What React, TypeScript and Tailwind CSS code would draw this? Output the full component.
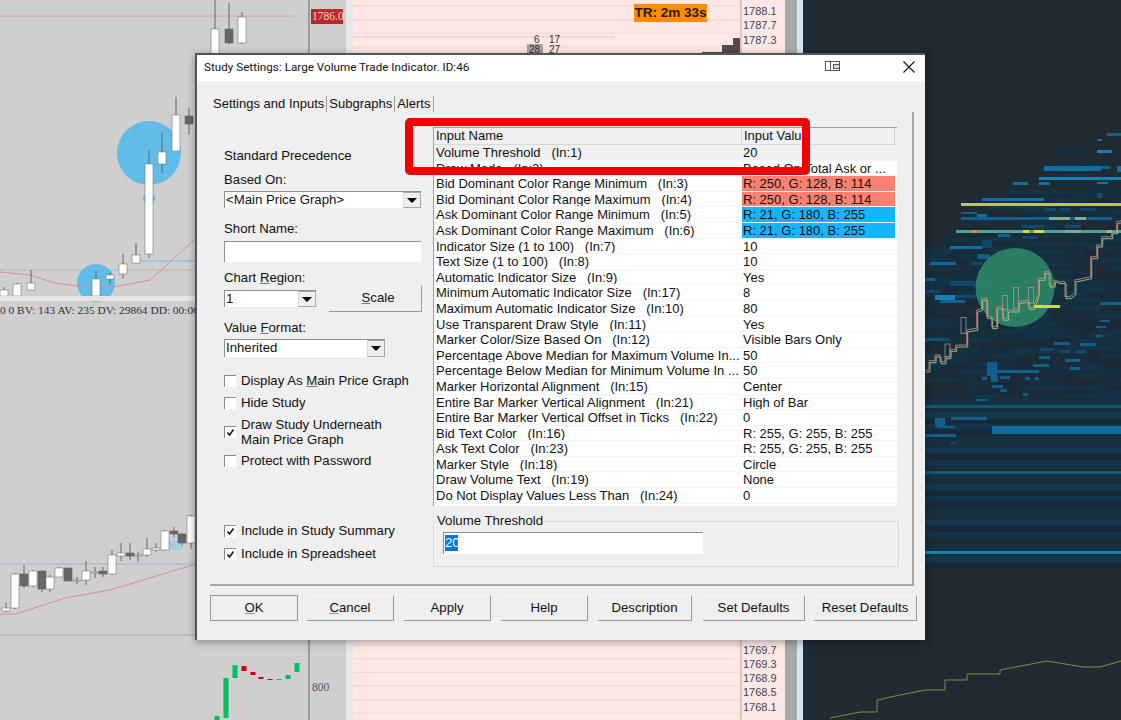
import type { ReactNode } from "react";

const SANS = "font-['Liberation_Sans',Arial,sans-serif]";

const inputs: [string, string, string, string?][] = [
  ["Volume Threshold", "1", "20"],
  ["Draw Mode", "2", "Based On Total Ask or ..."],
  ["Bid Dominant Color Range Minimum", "3", "R: 250, G: 128, B: 114", "red"],
  ["Bid Dominant Color Range Maximum", "4", "R: 250, G: 128, B: 114", "red"],
  ["Ask Dominant Color Range Minimum", "5", "R: 21, G: 180, B: 255", "blue"],
  ["Ask Dominant Color Range Maximum", "6", "R: 21, G: 180, B: 255", "blue"],
  ["Indicator Size (1 to 100)", "7", "10"],
  ["Text Size (1 to 100)", "8", "10"],
  ["Automatic Indicator Size", "9", "Yes"],
  ["Minimum Automatic Indicator Size", "17", "8"],
  ["Maximum Automatic Indicator Size", "10", "80"],
  ["Use Transparent Draw Style", "11", "Yes"],
  ["Marker Color/Size Based On", "12", "Visible Bars Only"],
  ["Percentage Above Median for Maximum Volume In...", "", "50"],
  ["Percentage Below Median for Minimum Volume In ...", "", "50"],
  ["Marker Horizontal Alignment", "15", "Center"],
  ["Entire Bar Marker Vertical Alignment", "21", "High of Bar"],
  ["Entire Bar Marker Vertical Offset in Ticks", "22", "0"],
  ["Bid Text Color", "16", "R: 255, G: 255, B: 255"],
  ["Ask Text Color", "23", "R: 255, G: 255, B: 255"],
  ["Marker Style", "18", "Circle"],
  ["Draw Volume Text", "19", "None"],
  ["Do Not Display Values Less Than", "24", "0"],
];

// x, wick top, wick bottom, body top, body bottom, dark?
const candles: [number, number, number, number, number, boolean][] = [
  [215, 0, 54, 29, 54, false],
  [229, 3, 44, 29, 43, true],
  [242, 12, 44, 17, 43, false],
  [176, 97, 151, 115, 151, false],
  [189, 108, 135, 116, 124, true],
  [162, 132, 173, 152, 164, false],
  [149, 150, 258, 164, 254, false],
  [136, 243, 263, 255, 263, false],
  [123, 254, 279, 264, 274, false],
  [110, 272, 285, 275, 279, false],
  [96, 270, 296, 279, 296, false],
  [31, 270, 290, 283, 290, false],
  [17, 283, 296, 284, 296, false],
  [4, 287, 296, 290, 296, false],
  [6, 603, 612, 608, 611, false],
  [15, 573, 609, 574, 608, false],
  [24, 565, 588, 574, 586, true],
  [33, 570, 587, 571, 586, false],
  [42, 570, 592, 571, 589, true],
  [50, 575, 592, 577, 589, false],
  [59, 567, 577, 568, 577, false],
  [68, 568, 581, 568, 581, true],
  [77, 577, 584, 580, 581, false],
  [86, 561, 585, 571, 580, false],
  [95, 567, 578, 572, 573, false],
  [103, 567, 577, 571, 574, true],
  [112, 550, 575, 555, 574, false],
  [121, 543, 561, 553, 556, false],
  [130, 543, 560, 553, 556, true],
  [138, 552, 562, 555, 556, false],
  [147, 538, 557, 549, 555, false],
  [156, 543, 552, 548, 550, false],
  [165, 530, 551, 531, 550, false],
  [174, 527, 537, 531, 534, true],
  [182, 533, 545, 534, 543, true],
  [191, 515, 549, 516, 543, false],
];

const greens: [number, number, number, string][] = [
  [217, 716, 720, "#00c060"],
  [226, 678, 718, "#00c060"],
  [235, 665, 678, "#00c060"],
  [244, 666, 671, "#d40010"],
  [253, 672, 675, "#d40010"],
  [261, 677, 679, "#d40010"],
  [270, 679, 680, "#d40010"],
  [279, 679, 680, "#00c060"],
  [288, 675, 679, "#00c060"],
  [297, 663, 672, "#00c060"],
];

// x1, x2, y, height, colour of the stronger heatmap levels
const levels: [number, number, number, number, string][] = [
  [1107, 1121, 133, 3, "#10618c"],
  [1097, 1102, 139, 2, "#12719f"],
  [1097, 1112, 150, 3, "#1480b4"],
  [1044, 1101, 166, 5, "#11709f"],
  [1101, 1110, 166, 3, "#10618c"],
  [1117, 1121, 166, 6, "#11709f"],
  [1039, 1121, 177, 3, "#1583b8"],
  [1013, 1028, 182, 3, "#11709f"],
  [1039, 1050, 182, 3, "#11709f"],
  [1097, 1108, 182, 2, "#11709f"],
  [1097, 1102, 193, 5, "#10506f"],
  [982, 1044, 198, 3, "#11709f"],
  [961, 977, 212, 2, "#10618c"],
  [961, 1112, 217, 3, "#10618c"],
  [977, 987, 214, 3, "#11709f"],
  [1044, 1056, 208, 3, "#0f4a6c"],
  [1060, 1070, 208, 3, "#0f4a6c"],
  [1080, 1096, 208, 3, "#0f4a6c"],
  [1065, 1081, 225, 3, "#0f4a6c"],
  [1022, 1044, 225, 3, "#0f4a6c"],
  [998, 1010, 234, 3, "#10618c"],
  [1022, 1038, 236, 3, "#0f4a6c"],
  [950, 982, 246, 3, "#11709f"],
  [982, 992, 240, 8, "#0f4a6c"],
  [930, 956, 262, 3, "#10689a"],
  [971, 982, 262, 3, "#0f4a6c"],
  [978, 990, 254, 5, "#10618c"],
  [925, 935, 278, 3, "#10618c"],
  [950, 990, 281, 5, "#0f4a6c"],
  [925, 940, 290, 3, "#0f4a6c"],
  [935, 955, 295, 5, "#1480b4"],
  [940, 965, 300, 3, "#10618c"],
  [955, 985, 295, 3, "#0f4a6c"],
  [1100, 1121, 302, 3, "#10618c"],
  [1100, 1110, 320, 2, "#0f5f8e"],
  [1096, 1106, 326, 2, "#0f5f8e"],
  [1096, 1102, 335, 2, "#0f5f8e"],
  [925, 950, 338, 3, "#10506f"],
  [1054, 1070, 342, 3, "#10618c"],
  [1080, 1096, 343, 3, "#10618c"],
  [1040, 1055, 348, 3, "#0f4a6c"],
  [1060, 1070, 350, 3, "#0f4a6c"],
  [1075, 1086, 350, 3, "#10506f"],
  [1039, 1050, 356, 3, "#10618c"],
  [1065, 1080, 359, 3, "#10618c"],
  [1033, 1049, 364, 3, "#10618c"],
  [1070, 1080, 367, 3, "#10618c"],
  [990, 1039, 370, 3, "#10618c"],
  [987, 997, 362, 14, "#0f5f8e"],
  [991, 998, 376, 6, "#0f5f8e"],
  [982, 987, 377, 3, "#10618c"],
  [1000, 1010, 376, 3, "#0f5f8e"],
  [1025, 1030, 377, 3, "#0f5f8e"],
  [1035, 1039, 377, 3, "#0f5f8e"],
  [992, 1003, 385, 3, "#0f5f8e"],
  [1000, 1007, 389, 3, "#0f5f8e"],
  [1023, 1028, 393, 3, "#0f5f8e"],
  [976, 987, 399, 2, "#10618c"],
  [974, 986, 405, 2, "#10618c"],
  [935, 945, 418, 8, "#10618c"],
  [951, 987, 417, 3, "#10618c"],
  [937, 955, 426, 2, "#0f5f8e"],
  [925, 956, 434, 3, "#10618c"],
  [950, 956, 442, 2, "#0f4a6c"],
  [992, 1121, 426, 8, "#0f6a9e"],
  [925, 1121, 405, 3, "#10587f"],
  [925, 1121, 471, 3, "#10587f"],
  [925, 1121, 551, 3, "#1a7fb2"],
];

// the dim depth cloud and the bands under it
function heatBars() {
  const bars: { x: number; y: number; w: number; h: number; c: string }[] = [];
  const dim = ["#182c39", "#153040", "#143347", "#1a2b37", "#162e40"];
  let n = 1;
  for (let y = 150; y < 400; y += 4) {
    const left = y < 190 ? 1060 : y < 250 ? 1010 - (y - 190) * 1.4 : 925;
    let x = left;
    while (x < 1121) {
      const v = Math.abs(Math.sin(n++ * 127.1) * 43758.5453) % 1;
      const w = 10 + v * 34;
      const skip = y < 190 ? v > 0.5 : y < 240 ? v > 0.75 : v > 0.95;
      if (!skip) bars.push({ x, y, w, h: 4, c: dim[Math.floor(v * 5)] });
      x += w;
    }
  }
  const bands = ["#15303f", "#1b2e3b", "#15384d", "#182a37", "#13334a", "#1a2b37"];
  for (let y = 400; y < 568; y += 6) {
    bars.push({ x: 925, y, w: 196, h: 6, c: bands[Math.floor(y / 6) % 6] });
  }
  return bars;
}

const path = (pts: number[][], ox: number, oy: number) =>
  pts.map(([x, y], i) => `${i ? "L" : "M"}${(ox + x / 3).toFixed(1)} ${(oy + y / 3).toFixed(1)}`).join(" ");

const stepLine =
  path([[0, 90], [12, 90], [12, 62], [30, 62], [30, 45], [45, 45], [45, 65], [60, 65], [60, 50], [75, 50], [75, 28], [92, 28], [92, 15], [125, 15], [125, 0]], 925, 340) +
  " " +
  path([[125, 720], [125, 690], [155, 685], [155, 630], [170, 625], [170, 595], [185, 595], [185, 650], [200, 650], [200, 680], [215, 680], [215, 620], [232, 620], [232, 655], [248, 655], [248, 630], [280, 630], [280, 605], [310, 600], [310, 622], [325, 622], [340, 580], [340, 535], [358, 535], [358, 515], [372, 515], [372, 555], [388, 555], [388, 540], [405, 545], [420, 545], [420, 590], [435, 590], [450, 578], [450, 540], [497, 530], [497, 470], [515, 470], [515, 435], [530, 435], [530, 410], [560, 410], [560, 395], [575, 395], [575, 365], [588, 362]], 925, 100);

const bottomLine =
  "M830 718 L860 712 H877 V700 L900 695 L925 690 H945 V680 H967 V674 H1000 V670 L1047 661 L1083 667 H1100 L1121 661";

function ChartLeft() {
  return (
    <svg className="block w-[346px] h-[720px]" viewBox="0 0 346 720">
      <line x1="0" y1="16" x2="295" y2="16" stroke="#d9a6a0" />
      <line x1="0" y1="270" x2="196" y2="270" stroke="#a8bccb" />
      <line x1="140" y1="261" x2="196" y2="261" stroke="#9cc7de" strokeWidth="2" />
      <line x1="0" y1="564" x2="196" y2="564" stroke="#9fb4c8" />
      <line x1="0" y1="635" x2="196" y2="635" stroke="#9fb0ad" />
      <rect x="168" y="541" width="15" height="9" fill="#a8cde0" />
      <circle cx="149" cy="153" r="32" fill="#61bce9" />
      <circle cx="149" cy="198" r="6" fill="#61bce9" />
      <circle cx="96" cy="283" r="19" fill="#61bce9" />
      <polyline points="0,272 30,275 55,283 85,287 120,286 150,280 170,262 196,238" fill="none" stroke="#d88aa8" />
      <polyline points="0,614 16,614 40,606 65,598 110,590 150,578 196,564" fill="none" stroke="#d88aa8" />
      {candles.map(([x, t, b, bt, bb, dark], i) => (
        <g key={i}>
          <line x1={x} y1={t} x2={x} y2={b} stroke="#666" />
          <rect x={x - 4} y={bt} width="8" height={bb - bt} fill={dark ? "#666" : "#fff"} stroke={dark ? "#666" : "#777"} strokeWidth="0.6" />
        </g>
      ))}
      {greens.map(([x, t, b, c], i) => (
        <rect key={i} x={x - 2.5} y={t} width="5" height={b - t} fill={c} />
      ))}
      <rect x="0" y="296" width="346" height="5" fill="#e6e6e6" />
      <line x1="309" y1="0" x2="309" y2="720" stroke="#6b6b6b" />
      <rect x="311" y="9" width="32" height="15" fill="#bb2a26" />
      <text x="312" y="20" fontSize="11.5" fill="#f3d3cf" fontFamily="Liberation Serif, serif">1786.0</text>
      <text x="0" y="314" fontSize="11.4" fill="#333" fontFamily="Liberation Serif, serif">0 0 BV: 143 AV: 235 DV: 29864 DD: 00:00</text>
      <text x="312" y="691" fontSize="11.5" fill="#555" fontFamily="Liberation Serif, serif">800</text>
    </svg>
  );
}

function ChartPink() {
  const lines: number[] = [];
  for (let y = 6; y < 720; y += 13.6) lines.push(y);
  return (
    <svg className="block w-[432px] h-[720px]" viewBox="353 0 432 720">
      {lines.map((y) => (
        <line key={y} x1="353" y1={y} x2="741" y2={y} stroke="#f3d6d2" />
      ))}
      <line x1="353" y1="37" x2="615" y2="37" stroke="#c9a6a2" strokeDasharray="1 1" />
      <rect x="527" y="44" width="16" height="10" fill="#a9a3a2" />
      <text x="534" y="43" fontSize="10" fill="#333" fontFamily="Liberation Sans, sans-serif">6</text>
      <text x="549" y="43" fontSize="10" fill="#333" fontFamily="Liberation Sans, sans-serif">17</text>
      <text x="529" y="53" fontSize="10" fill="#333" fontFamily="Liberation Sans, sans-serif">28</text>
      <text x="549" y="53" fontSize="10" fill="#333" fontFamily="Liberation Sans, sans-serif">27</text>
      <rect x="702" y="52" width="20" height="4" fill="#544a4a" />
      <rect x="722" y="45" width="11" height="11" fill="#544a4a" />
      <rect x="733" y="38" width="7" height="18" fill="#544a4a" />
      <line x1="741" y1="0" x2="741" y2="720" stroke="#b79e9b" />
      {[["1788.1", 15], ["1787.7", 29], ["1787.3", 44], ["1769.7", 654], ["1769.3", 668], ["1768.9", 682], ["1768.5", 696], ["1768.1", 711]].map(([t, y]) => (
        <text key={t} x="743" y={y} fontSize="11" fill="#444" fontFamily="Liberation Sans, sans-serif">{t}</text>
      ))}
    </svg>
  );
}

function ChartDark() {
  return (
    <svg className="block w-[318px] h-[720px]" viewBox="803 0 318 720">
      {heatBars().map((b, i) => (
        <rect key={i} x={b.x} y={b.y} width={b.w} height={b.h} fill={b.c} />
      ))}
      {levels.map(([x1, x2, y, h, c], i) => (
        <rect key={i} x={x1} y={y} width={x2 - x1} height={h} fill={c} />
      ))}
      <circle cx="1015" cy="287.5" r="39.5" fill="#2d8a68" fillOpacity="0.88" />
      <rect x="961" y="203" width="160" height="3" fill="#bccb3a" />
      <rect x="1049" y="217" width="21" height="3" fill="#78b48c" />
      <rect x="1075" y="217" width="11" height="3" fill="#78b48c" />
      <rect x="956" y="230" width="165" height="3" fill="#4f9f9a" />
      <rect x="972" y="230" width="5" height="3" fill="#d9922b" />
      <rect x="1023" y="230" width="6" height="3" fill="#e0dc30" />
      <rect x="1034" y="230" width="10" height="3" fill="#e0dc30" />
      <rect x="1065" y="230" width="16" height="3" fill="#74b290" />
      <rect x="1107" y="230" width="5" height="3" fill="#a8c060" />
      <rect x="1034" y="305" width="26" height="3" fill="#c8e02a" />
      <g fill="none" stroke="#8f9a9c" strokeWidth="0.8">
        <rect x="1013.5" y="287.5" width="5" height="21" />
        <rect x="1002.5" y="295.5" width="5" height="14" />
        <rect x="1028.5" y="287.5" width="5" height="16" />
        <rect x="961" y="317.5" width="5" height="16" />
        <rect x="945" y="344" width="5" height="13" />
      </g>
      <path d={stepLine} fill="none" stroke="#7fd79a" strokeWidth="0.9" transform="translate(1 2)" />
      <path d={stepLine} fill="none" stroke="#d87d72" strokeWidth="0.9" />
      <path d={bottomLine} fill="none" stroke="#8a8a3a" />
    </svg>
  );
}

function Check({ checked, children }: { checked?: boolean; children: ReactNode }) {
  return (
    <div className="flex items-center gap-[5px]">
      <div className="w-[12px] h-[12px] bg-white border-t border-l border-[#8a8a8a] flex items-center justify-center shrink-0">
        {checked && (
          <svg className="w-[9px] h-[9px]" viewBox="0 0 9 9">
            <path d="M1.5 4.5 L3.5 7 L7.5 1.5" fill="none" stroke="#111" strokeWidth="1.6" />
          </svg>
        )}
      </div>
      <div className="leading-[15px]">{children}</div>
    </div>
  );
}

function Combo({ value, width }: { value: string; width: string }) {
  return (
    <div className={`flex h-full bg-white border-t border-l border-[#8f8f8f] ${width}`}>
      <div className="flex-1 pl-[1px] leading-[15px]">{value}</div>
      <div className="w-[18px] bg-[#efefef] border border-[#a8a8a8] border-l-[#dcdcdc] flex items-center justify-center">
        <div className="w-0 h-0 border-l-[5px] border-r-[5px] border-t-[5px] border-l-transparent border-r-transparent border-t-black" />
      </div>
    </div>
  );
}

function DialogButton({ label, width, primary, u }: { label: string; width: string; primary?: boolean; u?: boolean }) {
  const first = u ? <span className="underline decoration-[#999]">{label[0]}</span> : label[0];
  return (
    <div className={`${width} h-[26px] flex items-center justify-center border-r border-b border-[#9a9a9a] ${primary ? "border-l border-t" : "border-t border-t-[#f8f8f8]"}`}>
      <span>{first}{label.slice(1)}</span>
    </div>
  );
}

function InputRow({ row, index }: { row: [string, string, string, string?]; index: number }) {
  const [name, id, value, tone] = row;
  const tail = id ? `   (In:${id})` : "";
  const rowBg = index === 0 ? "bg-[#f0f0f0]" : "bg-white";
  const cell = tone === "red" ? "bg-[#fa8072]" : tone === "blue" ? "bg-[#15b4ff]" : "";
  return (
    <div className={`flex h-[15.6px] leading-[15.6px] whitespace-pre border-b border-[#f3f3f3] ${rowBg}`}>
      <div className="w-[308px] pl-[2px] overflow-hidden shrink-0">{name}{tail}</div>
      <div className={`w-[153px] pl-[1px] overflow-hidden ${cell}`}>{value}</div>
    </div>
  );
}

function Dialog() {
  return (
    <div className={`absolute left-[195px] top-[53px] w-[730px] h-[587px] bg-[#efefef] border-l-2 border-t-2 border-[#555] shadow-[0_2px_8px_rgba(0,0,0,0.35)] text-[#111] text-[13.2px] ${SANS}`}>
      <div className="h-[26px] w-[727px] bg-white flex items-center pl-[7px] text-[11.7px] font-['Roboto',sans-serif]">
        <div className="flex-1">Study Settings: Large Volume Trade Indicator. ID:46</div>
        <svg className="w-[16px] h-[11px] mr-[62px] mb-[4px]" viewBox="0 0 16 11">
          <rect x="0.5" y="0.5" width="14" height="9" fill="none" stroke="#555" />
          <rect x="8.5" y="3.5" width="6" height="4" fill="#ddd" stroke="#555" />
          <line x1="5.5" y1="0.5" x2="5.5" y2="9.5" stroke="#555" />
        </svg>
        <svg className="w-[12px] h-[12px] mr-[9px] mb-[2px]" viewBox="0 0 12 12">
          <path d="M0.5 0.5 L11.5 11.5 M11.5 0.5 L0.5 11.5" stroke="#111" strokeWidth="1.1" />
        </svg>
      </div>

      {/* tabs */}
      <div className="flex items-center h-[31px] pl-[16px] pt-[14px] text-[13px]">
        <span>Settings and Inputs</span>
        <span className="w-px h-[16px] bg-[#a0a0a0] mx-[2px]" />
        <span>Subgraphs</span>
        <span className="w-px h-[16px] bg-[#a0a0a0] mx-[2px]" />
        <span>Alerts</span>
        <span className="w-px h-[16px] bg-[#a0a0a0] ml-[3px]" />
      </div>

      <div className="ml-[13px] w-[704px] h-[474px] border-r-2 border-b-2 border-[#a8a8a8] flex">
        <div className="w-[223px] pl-[14px] pt-[36px] shrink-0">
          <div className="h-[16px] leading-[16px]">Standard Precedence</div>
          <div className="h-[16px] leading-[16px] mt-[8px]">Based On:</div>
          <div className="h-[17px] mt-[3px]"><Combo value="<Main Price Graph>" width="w-[197px]" /></div>
          <div className="h-[16px] leading-[16px] mt-[13px]">Short Name:</div>
          <div className="h-[21px] w-[197px] mt-[4px] bg-white border-t border-l border-[#8f8f8f]" />
          <div className="h-[16px] leading-[16px] mt-[8px]">Chart <span className="underline decoration-[#777]">R</span>egion:</div>
          <div className="h-[17px] mt-[4px] flex items-center gap-[13px]">
            <Combo value="1" width="w-[92px]" />
            <div className="w-[93px] h-[26px] shrink-0 flex items-center justify-center border-r border-b border-[#9a9a9a]">
              <span className="ml-[6px]"><span className="underline decoration-[#777]">S</span>cale</span>
            </div>
          </div>
          <div className="h-[16px] leading-[16px] mt-[13px]">Value <span className="underline decoration-[#777]">F</span>ormat:</div>
          <div className="h-[18px] mt-[3px]"><Combo value="Inherited" width="w-[161px]" /></div>
          <div className="mt-[16px]"><Check>Display As <span className="underline decoration-[#777]">M</span>ain Price Graph</Check></div>
          <div className="mt-[7px]"><Check>Hide Study</Check></div>
          <div className="mt-[7px]"><Check checked>Draw Study Underneath<br />Main Price Graph</Check></div>
          <div className="mt-[6px]"><Check>Protect with Password</Check></div>
          <div className="mt-[55px]"><Check checked>Include in Study Summary</Check></div>
          <div className="mt-[8px]"><Check checked>Include in Spreadsheet</Check></div>
        </div>

        <div className="flex-1 pt-[15px]">
          <div className="w-[464px] border-l border-t border-[#a0a0a0] text-[13px]">
            <div className="flex h-[17px] leading-[16px] bg-[#f0f0f0] border-b border-[#d8d8d8]">
              <div className="w-[308px] pl-[2px] border-r border-[#d0d0d0]">Input Name</div>
              <div className="w-[153px] pl-[2px] border-r border-[#d0d0d0]">Input Value</div>
            </div>
            <div className="bg-white h-[361px] overflow-hidden">
              {inputs.map((row, i) => (
                <InputRow key={row[0]} row={row} index={i} />
              ))}
            </div>
          </div>
          <div className="relative w-[466px] h-[46px] mt-[15px] border border-[#d8d8d8]">
            <div className="absolute left-[3px] -top-[9px] h-[16px] leading-[16px] bg-[#efefef] pr-[2px]">Volume Threshold</div>
            <div className="ml-[9px] mt-[10px] w-[260px] h-[22px] bg-white border-t border-l border-[#8f8f8f] pl-[1px] pt-[2px]">
              <span className="block w-[13px] h-[16px] leading-[16px] bg-[#0078d7] text-white">20</span>
            </div>
          </div>
        </div>
      </div>

      <div className="flex ml-[13px] mt-[9px]">
        <DialogButton label="OK" width="w-[88px]" primary u />
        <div className="w-[9px]" />
        <DialogButton label="Cancel" width="w-[87px]" u />
        <div className="w-[10px]" />
        <DialogButton label="Apply" width="w-[87px]" />
        <div className="w-[10px]" />
        <DialogButton label="Help" width="w-[87px]" />
        <div className="w-[10px]" />
        <DialogButton label="Description" width="w-[94px]" />
        <div className="w-[11px]" />
        <DialogButton label="Set Defaults" width="w-[102px]" />
        <div className="w-[9px]" />
        <DialogButton label="Reset Defaults" width="w-[103px]" />
      </div>
    </div>
  );
}

export default function App() {
  return (
    <div className="relative w-[1121px] h-[720px] overflow-hidden flex bg-[#1f2a33]">
      <div className="w-[346px] bg-[#cfcfcf]"><ChartLeft /></div>
      <div className="w-[7px] bg-[#e8e8e8]" />
      <div className="w-[432px] bg-[#fde8e6]"><ChartPink /></div>
      <div className="w-[12px] bg-[#a8a8a8]" />
      <div className="w-[6px] bg-[#d8e6f2]" />
      <div className="w-[318px] bg-[#1f2a33]"><ChartDark /></div>

      <Dialog />

      {/* annotation drawn over the screenshot */}
      <div className="absolute left-[405px] top-[118px] w-[405px] h-[57px] border-[8px] border-[#f50000] rounded-[5px]" />

      <div className={`absolute left-[634px] top-[4px] w-[73px] h-[18px] bg-[#ff8c00] text-center font-bold text-[13.5px] leading-[18px] text-[#2a1a00] ${SANS}`}>TR: 2m 33s</div>
    </div>
  );
}
